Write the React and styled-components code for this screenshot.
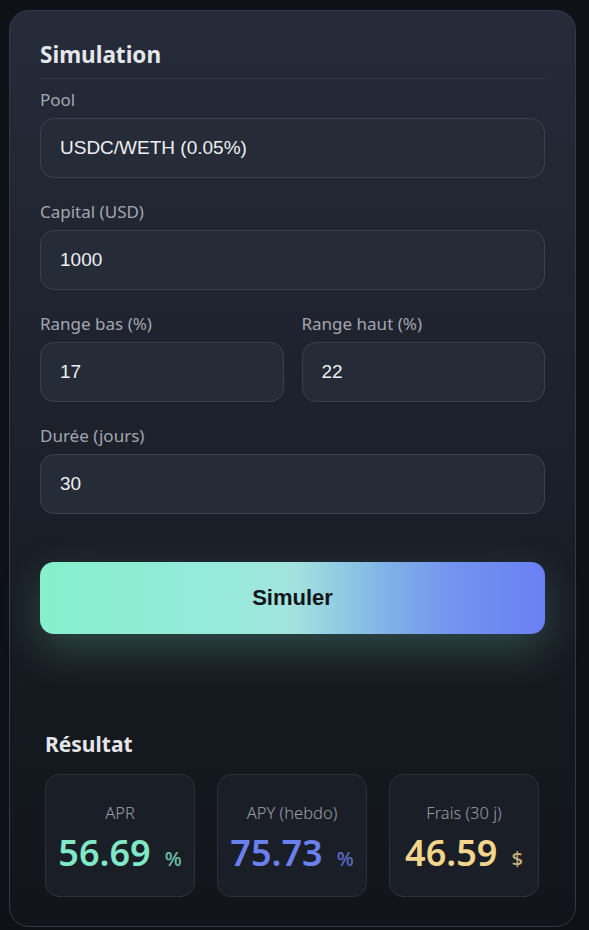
import styled, { createGlobalStyle } from "styled-components";

const Global = createGlobalStyle`
  * { box-sizing: border-box; }
  body {
    margin: 0;
    background: #0e1117;
    font-family: "Noto Sans", "Open Sans", sans-serif;
  }
`;

const Card = styled.div`
  margin: 10px 0 0 9px;
  width: 567px;
  height: 917px;
  padding: 30px 30px 0 30px;
  border: 1px solid #333947;
  border-radius: 20px;
  background: linear-gradient(180deg, #252b39 0%, #1d212c 45%, #151920 75%, #11141b 100%);
`;

const Title = styled.h2`
  margin: 0;
  font-size: 22.5px;
  line-height: 28px;
  font-weight: 700;
  color: #e4e6ea;
  padding-bottom: 9px;
  border-bottom: 1px solid #323846;
`;

const Form = styled.div`
  display: flex;
  flex-direction: column;
  gap: 23px;
  margin-top: 10px;
`;

const Row = styled.div`
  display: grid;
  grid-template-columns: 1fr 1fr;
  gap: 18px;
`;

const Field = styled.label`
  display: flex;
  flex-direction: column;
  gap: 7px;
`;

const Label = styled.span`
  font-size: 17px;
  line-height: 22px;
  color: #a3a7b0;
`;

const Input = styled.div`
  height: 60px;
  display: flex;
  align-items: center;
  padding: 0 19px;
  border: 1px solid #3a404e;
  border-radius: 14px;
  background: #262b38;
  font-family: "Liberation Sans", Arial, sans-serif;
  font-size: 19px;
  color: #eef0f3;
`;

const Button = styled.button`
  margin-top: 48px;
  width: 100%;
  height: 72px;
  border: none;
  border-radius: 14px;
  background: linear-gradient(90deg, #86efcb 0%, #95eadb 35%, #a3e3de 50%, #80b4e6 68%, #7393ef 82%, #6a80f4 100%);
  box-shadow: 0 16px 44px rgba(120, 220, 190, 0.24);
  font-family: "Liberation Sans", Arial, sans-serif;
  font-size: 22px;
  font-weight: 700;
  color: #111418;
  padding-bottom: 2px;
  cursor: pointer;
`;

const Results = styled.section`
  margin-top: 97px;
  padding: 0 6px 0 5px;
`;

const SubTitle = styled.h3`
  margin: 0 0 17px;
  font-size: 21px;
  line-height: 26px;
  font-weight: 700;
  color: #e4e6ea;
`;

const Stats = styled.div`
  display: grid;
  grid-template-columns: repeat(3, 1fr);
  gap: 22px;
`;

const Stat = styled.div`
  height: 123px;
  padding-top: 26px;
  display: flex;
  flex-direction: column;
  align-items: center;
  gap: 6px;
  border: 1px solid #2c313b;
  border-radius: 14px;
  background: #1a1e26;
`;

const StatLabel = styled.span`
  font-size: 16.5px;
  line-height: 24px;
  font-weight: 300;
  color: #9a9ea6;
`;

const Value = styled.div`
  display: flex;
  align-items: baseline;
  gap: 14px;
  color: ${(p) => p.$color};
  font-size: 36px;
  line-height: 44px;
  font-weight: 600;
`;

const Unit = styled.span`
  font-size: 20px;
  font-weight: 500;
  opacity: 0.8;
`;

const stats = [
  { label: "APR", value: "56.69", unit: "%", color: "#80e8c6" },
  { label: "APY (hebdo)", value: "75.73", unit: "%", color: "#6a80ee" },
  { label: "Frais (30 j)", value: "46.59", unit: "$", color: "#f4d58c" },
];

export default function App() {
  return (
    <>
      <Global />
      <Card>
        <Title>Simulation</Title>
        <Form>
          <Field>
            <Label>Pool</Label>
            <Input>USDC/WETH (0.05%)</Input>
          </Field>
          <Field>
            <Label>Capital (USD)</Label>
            <Input>1000</Input>
          </Field>
          <Row>
            <Field>
              <Label>Range bas (%)</Label>
              <Input>17</Input>
            </Field>
            <Field>
              <Label>Range haut (%)</Label>
              <Input>22</Input>
            </Field>
          </Row>
          <Field>
            <Label>Durée (jours)</Label>
            <Input>30</Input>
          </Field>
        </Form>
        <Button>Simuler</Button>
        <Results>
          <SubTitle>Résultat</SubTitle>
          <Stats>
            {stats.map((s) => (
              <Stat key={s.label}>
                <StatLabel>{s.label}</StatLabel>
                <Value $color={s.color}>
                  {s.value}
                  <Unit>{s.unit}</Unit>
                </Value>
              </Stat>
            ))}
          </Stats>
        </Results>
      </Card>
    </>
  );
}
